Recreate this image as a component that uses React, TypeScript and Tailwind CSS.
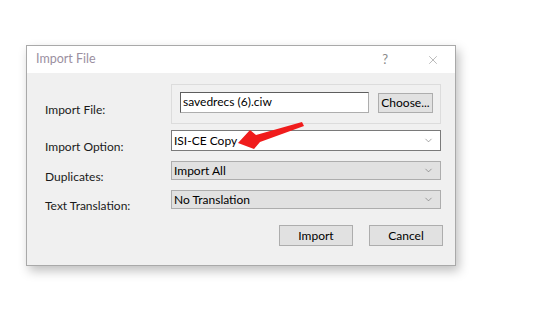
import { ChevronDown, X } from "lucide-react";

const font = { fontFamily: 'Lato, "Noto Sans", sans-serif' };

function Dropdown({ value, white }: { value: string; white?: boolean }) {
  return (
    <div
      className={
        "flex h-full w-[270px] items-center justify-between border pl-[2px] pr-[6px] text-[12px] text-black " +
        (white ? "border-[#7a7a7a] bg-white" : "border-[#adadad] bg-[#e1e1e1]")
      }
    >
      <span className="leading-none">{value}</span>
      <ChevronDown size={11} strokeWidth={1.2} className="text-[#606060]" />
    </div>
  );
}

function Label({ children, pt }: { children: string; pt: string }) {
  return <div className={"w-[126px] shrink-0 text-[12px] text-[#1a1a1a] " + pt}>{children}</div>;
}

export default function App() {
  return (
    <div className="relative h-[324px] w-[537px] bg-white" style={font}>
      <div className="ml-[26px] pt-[45px]">
        <div className="flex h-[221px] w-[430px] flex-col border border-[#a9a9a9] shadow-[3px_5px_10px_rgba(0,0,0,0.25)]">
          <div className="flex h-[27px] items-center justify-between bg-white pl-[9px] pr-[15px]">
            <span className="text-[12.5px] text-[#9b8f9f]">Import File</span>
            <div className="flex items-center gap-[38px] text-[#8a8a8a]">
              <span className="text-[13px]">?</span>
              <X size={14} strokeWidth={1} />
            </div>
          </div>
          <div className="flex flex-1 flex-col bg-[#f0f0f0] pl-[18px] pt-[11px]">
            <div className="flex h-[40px]">
              <Label pt="pt-[17px]">Import File:</Label>
              <div className="flex w-[270px] gap-[9px] border border-[#dcdcdc] pl-[8px] pt-[7px]">
                <div className="h-[21px] w-[189px] border border-[#adadad] border-l-[#5e5e5e] border-t-[#5e5e5e] bg-white pl-[2px] text-[12px] leading-[18px] text-black">
                  savedrecs (6).ciw
                </div>
                <div className="mt-[1px] flex h-[20px] w-[55px] items-center justify-center border border-[#adadad] bg-[#e1e1e1] text-[12px] text-black">
                  Choose...
                </div>
              </div>
            </div>
            <div className="mt-[6px] flex h-[21px]">
              <Label pt="pt-[8px]">Import Option:</Label>
              <Dropdown value="ISI-CE Copy" white />
            </div>
            <div className="mt-[10px] flex h-[19px]">
              <Label pt="pt-[7px]">Duplicates:</Label>
              <Dropdown value="Import All" />
            </div>
            <div className="mt-[10px] flex h-[19px]">
              <Label pt="pt-[7px]">Text Translation:</Label>
              <Dropdown value="No Translation" />
            </div>
            <div className="mt-[16px] flex gap-[16px] pl-[234px]">
              <div className="flex h-[21px] w-[74px] items-center justify-center border border-[#adadad] bg-[#e1e1e1] text-[12px] text-black">
                Import
              </div>
              <div className="flex h-[21px] w-[74px] items-center justify-center border border-[#adadad] bg-[#e1e1e1] text-[12px] text-black">
                Cancel
              </div>
            </div>
          </div>
        </div>
      </div>
      <svg className="absolute left-0 top-0" width="537" height="324">
        <polygon
          points="238,143 250,130 256,135 302,122 304,126 260,142 254,149"
          fill="#f01c1c"
        />
      </svg>
    </div>
  );
}
